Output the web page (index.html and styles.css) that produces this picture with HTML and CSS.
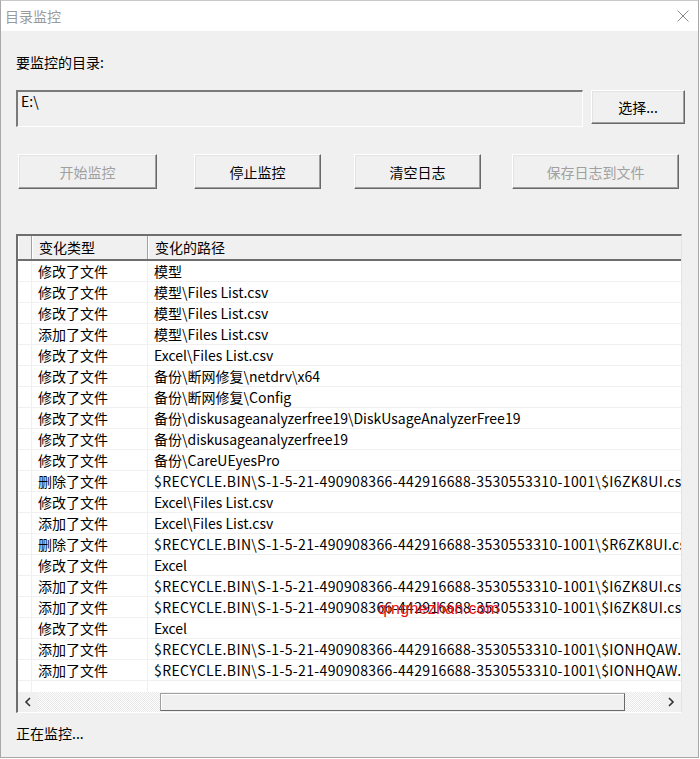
FILE: index.html
```html
<!DOCTYPE html>
<html lang="zh-CN">
<head>
<meta charset="utf-8">
<title>目录监控</title>
<link rel="stylesheet" href="styles.css">
</head>
<body>
<div class="window">
  <div class="titlebar">
    <span class="title">目录监控</span>
    <svg class="close" width="12" height="12" viewBox="0 0 12 12"><path d="M0.5 0.5 L11.5 11.5 M11.5 0.5 L0.5 11.5" stroke="#8a8a8a" stroke-width="1" fill="none"/></svg>
  </div>
  <div class="content">
    <div class="label">要监控的目录:</div>
    <div class="dir-row">
      <div class="input">E:\</div>
      <div class="btn btn-choose">选择...</div>
    </div>
    <div class="btn-row">
      <div class="btn disabled w-start">开始监控</div>
      <div class="btn w-mid">停止监控</div>
      <div class="btn w-mid">清空日志</div>
      <div class="btn disabled w-save">保存日志到文件</div>
    </div>
    <div class="list">
      <div class="header">
        <div class="hcell c0"></div>
        <div class="hcell c1">变化类型</div>
        <div class="hcell c2">变化的路径</div>
      </div>
      <div class="rows">
        <div class="row"><div class="cell c0"></div><div class="cell c1">修改了文件</div><div class="cell c2">模型</div></div>
        <div class="row"><div class="cell c0"></div><div class="cell c1">修改了文件</div><div class="cell c2">模型\Files List.csv</div></div>
        <div class="row"><div class="cell c0"></div><div class="cell c1">修改了文件</div><div class="cell c2">模型\Files List.csv</div></div>
        <div class="row"><div class="cell c0"></div><div class="cell c1">添加了文件</div><div class="cell c2">模型\Files List.csv</div></div>
        <div class="row"><div class="cell c0"></div><div class="cell c1">修改了文件</div><div class="cell c2">Excel\Files List.csv</div></div>
        <div class="row"><div class="cell c0"></div><div class="cell c1">修改了文件</div><div class="cell c2">备份\断网修复\netdrv\x64</div></div>
        <div class="row"><div class="cell c0"></div><div class="cell c1">修改了文件</div><div class="cell c2">备份\断网修复\Config</div></div>
        <div class="row"><div class="cell c0"></div><div class="cell c1">修改了文件</div><div class="cell c2">备份\diskusageanalyzerfree19\DiskUsageAnalyzerFree19</div></div>
        <div class="row"><div class="cell c0"></div><div class="cell c1">修改了文件</div><div class="cell c2">备份\diskusageanalyzerfree19</div></div>
        <div class="row"><div class="cell c0"></div><div class="cell c1">修改了文件</div><div class="cell c2">备份\CareUEyesPro</div></div>
        <div class="row"><div class="cell c0"></div><div class="cell c1">删除了文件</div><div class="cell c2 long">$RECYCLE.BIN\S-1-5-21-490908366-442916688-3530553310-1001\$I6ZK8UI.csv</div></div>
        <div class="row"><div class="cell c0"></div><div class="cell c1">修改了文件</div><div class="cell c2">Excel\Files List.csv</div></div>
        <div class="row"><div class="cell c0"></div><div class="cell c1">添加了文件</div><div class="cell c2">Excel\Files List.csv</div></div>
        <div class="row"><div class="cell c0"></div><div class="cell c1">删除了文件</div><div class="cell c2 long">$RECYCLE.BIN\S-1-5-21-490908366-442916688-3530553310-1001\$R6ZK8UI.csv</div></div>
        <div class="row"><div class="cell c0"></div><div class="cell c1">修改了文件</div><div class="cell c2">Excel</div></div>
        <div class="row"><div class="cell c0"></div><div class="cell c1">添加了文件</div><div class="cell c2 long">$RECYCLE.BIN\S-1-5-21-490908366-442916688-3530553310-1001\$I6ZK8UI.csv</div></div>
        <div class="row"><div class="cell c0"></div><div class="cell c1">添加了文件</div><div class="cell c2 long">$RECYCLE.BIN\S-1-5-21-490908366-442916688-3530553310-1001\$I6ZK8UI.csv</div></div>
        <div class="row"><div class="cell c0"></div><div class="cell c1">修改了文件</div><div class="cell c2">Excel</div></div>
        <div class="row"><div class="cell c0"></div><div class="cell c1">添加了文件</div><div class="cell c2 long">$RECYCLE.BIN\S-1-5-21-490908366-442916688-3530553310-1001\$IONHQAW.csv</div></div>
        <div class="row"><div class="cell c0"></div><div class="cell c1">添加了文件</div><div class="cell c2 long">$RECYCLE.BIN\S-1-5-21-490908366-442916688-3530553310-1001\$IONHQAW.csv</div></div>
        <div class="row"><div class="cell c0"></div><div class="cell c1"></div><div class="cell c2"></div></div>
      </div>
      <div class="hscroll">
        <div class="arrow">
          <svg width="8" height="10" viewBox="0 0 8 10"><path d="M6 1 L2 5 L6 9" stroke="#303030" stroke-width="1.6" fill="none"/></svg>
        </div>
        <div class="track left-track"></div>
        <div class="thumb"></div>
        <div class="track right-track"></div>
        <div class="arrow">
          <svg width="8" height="10" viewBox="0 0 8 10"><path d="M2 1 L6 5 L2 9" stroke="#303030" stroke-width="1.6" fill="none"/></svg>
        </div>
      </div>
    </div>
    <div class="status">正在监控...</div>
  </div>
  <div class="watermark">qinghezhan.com</div>
</div>
</body>
</html>
```

FILE: styles.css
```css
html, body {
  margin: 0;
  padding: 0;
  background: #ffffff;
}

body {
  font-family: "Noto Sans CJK SC", "Microsoft YaHei", "Noto Sans", sans-serif;
  font-size: 14px;
  color: #000;
}

.window {
  position: relative;
  width: 699px;
  height: 758px;
  box-sizing: border-box;
  border-left: 1px solid #a8a8a8;
  border-right: 1px solid #a8a8a8;
  border-bottom: 1px solid #a8a8a8;
  border-top: 1px solid #c8c8c8;
  display: flex;
  flex-direction: column;
  background: #f0f0f0;
}

.titlebar {
  height: 30px;
  background: #ffffff;
  display: flex;
  align-items: center;
  justify-content: space-between;
  padding: 0 9px 0 4px;
  flex: none;
}

.title {
  color: #9a9a9a;
  font-size: 14px;
  line-height: 20px;
}

.close {
  display: block;
  margin-top: -1px;
}

.content {
  flex: 1;
  display: flex;
  flex-direction: column;
  padding: 21px 0 0 15px;
}

.label {
  line-height: 20px;
  height: 20px;
}

.dir-row {
  display: flex;
  align-items: flex-start;
  margin-top: 18px;
}

.input {
  width: 567px;
  height: 37px;
  box-sizing: border-box;
  border-style: solid;
  border-width: 2px 1px 1px 2px;
  border-color: #7a7a7a #ffffff #ffffff #7a7a7a;
  background: #f0f0f0;
  padding: 0 0 0 3px;
  line-height: 18px;
  font-size: 14px;
}

.btn {
  box-sizing: border-box;
  height: 35px;
  background: #f0f0f0;
  border-style: solid;
  border-width: 1px;
  border-color: #ffffff #696969 #696969 #ffffff;
  box-shadow: inset -1px -1px 0 #a0a0a0, inset 1px 1px 0 #e3e3e3;
  display: flex;
  align-items: center;
  justify-content: center;
  line-height: 20px;
}

.btn.disabled {
  color: #a0a0a0;
}

.btn-choose {
  width: 94px;
  height: 34px;
  margin-left: 8px;
}

.btn-row {
  display: flex;
  margin-top: 27px;
  padding-left: 2px;
}

.w-start {
  width: 139px;
}

.w-mid {
  width: 127px;
}

.w-start + .w-mid {
  margin-left: 37px;
}

.w-mid + .w-mid {
  margin-left: 33px;
}

.w-save {
  width: 167px;
  margin-left: 31px;
}

.list {
  margin-top: 45px;
  width: 666px;
  box-sizing: border-box;
  border-style: solid;
  border-width: 2px 1px 1px 2px;
  border-color: #6e6e6e #e3e3e3 #ffffff #6e6e6e;
  background: #ffffff;
  display: flex;
  flex-direction: column;
}

.header {
  display: flex;
  height: 25px;
  box-sizing: border-box;
  border-bottom: 2px solid #6e6e6e;
  background: #f0f0f0;
  flex: none;
}

.hcell {
  box-sizing: border-box;
  height: 23px;
  line-height: 23px;
  border-left: 1px solid #ffffff;
  border-right: 1px solid #a0a0a0;
  padding-left: 6px;
  white-space: nowrap;
}

.c0 {
  width: 14px;
  flex: none;
}

.c1 {
  width: 116px;
  flex: none;
}

.c2 {
  flex: 1;
  min-width: 0;
}

.hcell.c0 {
  padding-left: 0;
}

.hcell.c2 {
  border-right: none;
}

.rows {
  height: 431px;
  overflow: hidden;
  flex: none;
}

.row {
  display: flex;
  height: 21px;
  box-sizing: border-box;
  border-bottom: 1px solid #f0f0f0;
}

.cell {
  box-sizing: border-box;
  height: 20px;
  line-height: 20px;
  border-right: 1px solid #f0f0f0;
  padding-left: 6px;
  white-space: nowrap;
  overflow: hidden;
}

.cell.c0 {
  padding-left: 0;
}

.cell.c2 {
  border-right: none;
}

.cell.long {
  letter-spacing: 0.36px;
}

.hscroll {
  display: flex;
  height: 20px;
  flex: none;
  background: #f0f0f0;
}

.arrow {
  width: 20px;
  flex: none;
  display: flex;
  align-items: center;
  justify-content: center;
  background: #f0f0f0;
}

.track {
  background: repeating-conic-gradient(#ffffff 0 25%, #e6e6e6 0 50%) 0 0 / 2px 2px;
}

.left-track {
  width: 122px;
  flex: none;
}

.right-track {
  flex: 1;
}

.thumb {
  width: 465px;
  flex: none;
  box-sizing: border-box;
  margin: 1px 0;
  border: 1px solid #a0a0a0;
  border-right-color: #696969;
  border-bottom-color: #696969;
  background: #f0f0f0;
  box-shadow: inset 1px 1px 0 #ffffff;
}

.status {
  margin-top: 10px;
  line-height: 20px;
}

.watermark {
  position: absolute;
  left: 377px;
  top: 599px;
  color: #e81010;
  font-family: "Liberation Sans", "Noto Sans", sans-serif;
  font-size: 16px;
  line-height: 18px;
  letter-spacing: 0.3px;
}
```
